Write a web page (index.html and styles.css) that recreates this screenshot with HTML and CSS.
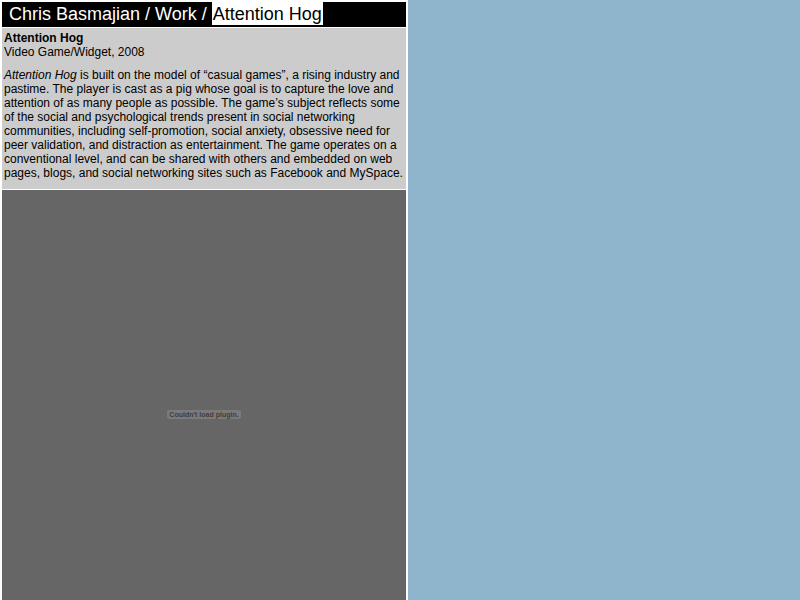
FILE: index.html
```html
<!DOCTYPE html>
<html>
<head>
<meta charset="utf-8">
<link rel="stylesheet" href="styles.css">
</head>
<body>
<div class="page">
  <div class="left">
    <div class="header">Chris Basmajian / Work / <span class="current">Attention Hog</span></div>
    <div class="info">
      <div class="title">Attention Hog</div>
      <div class="sub">Video Game/Widget, 2008</div>
      <p class="desc"><em>Attention Hog</em> is built on the model of “casual games”, a rising industry and pastime. The player is cast as a pig whose goal is to capture the love and attention of as many people as possible. The game’s subject reflects some of the social and psychological trends present in social networking communities, including self-promotion, social anxiety, obsessive need for peer validation, and distraction as entertainment. The game operates on a conventional level, and can be shared with others and embedded on web pages, blogs, and social networking sites such as Facebook and MySpace.</p>
    </div>
    <div class="plugin">
      <span class="plugin-msg">Couldn't load plugin.</span>
    </div>
  </div>
  <div class="right"></div>
</div>
</body>
</html>
```
FILE: styles.css
```css
html, body {
  margin: 0;
  padding: 0;
  height: 100%;
  overflow: hidden;
}
body {
  background: #8eb5cb;
  font-family: "Liberation Sans", Arial, sans-serif;
}
.page {
  display: flex;
  height: 600px;
}
.left {
  width: 404px;
  background: #ffffff;
  padding: 2px 2px 0 2px;
  display: flex;
  flex-direction: column;
}
.right {
  flex: 1;
}
.header {
  background: #000;
  color: #fff;
  font-size: 18px;
  height: 25px;
  line-height: 25px;
  padding-left: 7px;
  white-space: nowrap;
}
.current {
  background: #fff;
  color: #000;
  padding: 2px 1px 1px 1px;
}
.info {
  margin-top: 1px;
  background: #cccccc;
  padding: 3px 2px 9px 2px;
  font-size: 12px;
  line-height: 14px;
  color: #000;
}
.title {
  font-weight: bold;
}
.desc {
  margin: 9px 0 0 0;
}
.plugin {
  margin-top: 1px;
  flex: 1;
  background: #666666;
  display: flex;
  align-items: center;
  justify-content: center;
}
.plugin-msg {
  font-size: 7px;
  font-weight: bold;
  color: #3e3e3e;
  background: #7a7a7a;
  padding: 1px 2px;
  border-radius: 2px;
  margin-top: 38px;
}
```
